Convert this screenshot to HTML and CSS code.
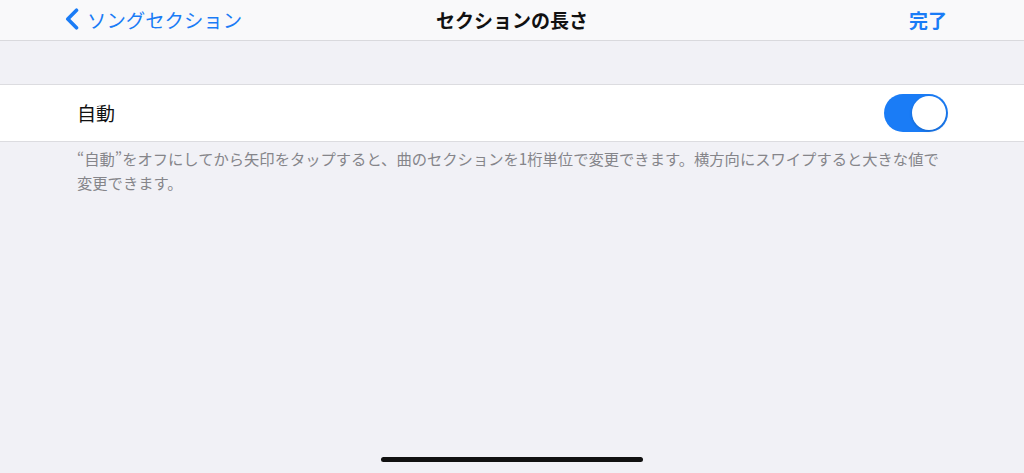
FILE: index.html
```html
<!DOCTYPE html>
<html lang="ja">
<head>
  <meta charset="UTF-8">
  <title>セクションの長さ</title>
  <link rel="stylesheet" href="styles.css">
</head>
<body>
  <div class="screen">
    <!-- ナビゲーションバー -->
    <div class="navbar">
      <a href="#" class="nav-back">
        <svg class="chevron" width="14" height="22" viewBox="0 0 14 22">
          <path d="M11.5 2.2 L2.8 11 L11.5 19.8" fill="none" stroke="#1a7cf6" stroke-width="3.6" stroke-linecap="round" stroke-linejoin="round"/>
        </svg>
        <span>ソングセクション</span>
      </a>
      <div class="nav-title">セクションの長さ</div>
      <a href="#" class="nav-done">完了</a>
    </div>

    <div class="group">
      <div class="row">
        <span class="row-label">自動</span>
        <label class="switch">
          <input type="checkbox" checked>
          <span class="knob"></span>
        </label>
      </div>
    </div>
    <p class="footer">“自動”をオフにしてから矢印をタップすると、曲のセクションを1桁単位で変更できます。横方向にスワイプすると大きな値で変更できます。</p>

    <div class="home-bar"></div>
  </div>
</body>
</html>
```

FILE: styles.css
```css
body {
  margin: 0;
  padding: 0;
  height: 100vh;
  overflow: hidden;
  background: #f1f1f6;
  font-family: "Noto Sans CJK JP", "Noto Sans", sans-serif;
}
.screen {
  display: flex;
  flex-direction: column;
  height: 100%;
}
.navbar {
  display: flex;
  align-items: center;
  justify-content: space-between;
  height: 40px;
  padding: 0 77px 0 65px;
  background: #f9f9fa;
  border-bottom: 1px solid #d9d9dd;
  position: relative;
}
.nav-back {
  display: flex;
  align-items: center;
  gap: 8px;
  color: #1a7cf6;
  text-decoration: none;
  font-size: 19.4px;
  margin-top: -2px;
}
.chevron {
  display: block;
}
.nav-title {
  position: absolute;
  left: 0;
  right: 0;
  text-align: center;
  font-size: 19px;
  font-weight: bold;
  color: #111;
  pointer-events: none;
  margin-top: -2px;
}
.nav-done {
  color: #1a7cf6;
  text-decoration: none;
  font-size: 19px;
  font-weight: bold;
  margin-top: -2px;
}

.group {
  margin-top: 43px;
  background: #fff;
  border-top: 1px solid #dcdce0;
  border-bottom: 1px solid #dcdce0;
}
.row {
  display: flex;
  align-items: center;
  justify-content: space-between;
  height: 56px;
  padding: 0 76px 0 77px;
}
.row-label {
  font-size: 19px;
  color: #111;
  margin-top: -2px;
}
.switch {
  position: relative;
  display: block;
  width: 64px;
  height: 38px;
}
.switch input {
  display: none;
}
.knob {
  position: absolute;
  top: 0; left: 0; right: 0; bottom: 0;
  background: #1a7cf6;
  border-radius: 19px;
}
.knob:before {
  content: "";
  position: absolute;
  width: 34px;
  height: 34px;
  top: 2px;
  right: 2px;
  background: #fff;
  border-radius: 50%;
  box-shadow: 0 1px 3px rgba(0,0,0,0.2);
}

.footer {
  margin: 4px 0 0;
  padding: 0 75px 0 77px;
  font-size: 15.3px;
  line-height: 24px;
  color: #85858a;
}

.home-bar {
  margin: auto auto 11px;
  width: 262px;
  height: 5px;
  border-radius: 3px;
  background: #111;
}
```
